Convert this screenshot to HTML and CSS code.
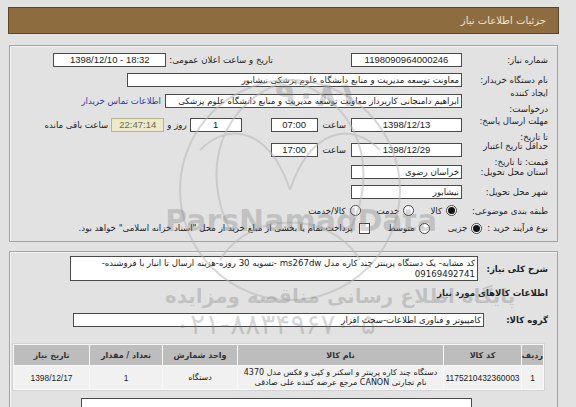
FILE: index.html
```html
<!DOCTYPE html>
<html lang="fa" dir="rtl">
<head>
<meta charset="utf-8">
<title>جزئیات اطلاعات نیاز</title>
<link rel="stylesheet" href="styles.css">
</head>
<body>
<div class="page">
  <div class="titlebar">جزئیات اطلاعات نیاز</div>

  <div class="panel form">
    <div class="lbl">شماره نیاز:</div>
    <div class="cell">
      <span class="box c w111">1198090964000246</span>
      <span class="txt pub">تاریخ و ساعت اعلان عمومی:</span>
      <span class="box c w113 ltr">1398/12/10 - 18:32</span>
    </div>

    <div class="lbl">نام دستگاه خریدار:</div>
    <div class="cell">
      <span class="box w335">معاونت توسعه مدیریت و منابع دانشگاه علوم پزشکی نیشابور</span>
    </div>

    <div class="lbl">ایجاد کننده<br>درخواست:</div>
    <div class="cell">
      <span class="box w297">ابراهیم دامنجانی  کاربرداز معاونت توسعه مدیریت و منابع دانشگاه علوم پزشکی</span>
      <a class="link" href="#">اطلاعات تماس خریدار</a>
    </div>

    <div class="lbl low">مهلت ارسال پاسخ:<br>تا تاریخ:</div>
    <div class="cell">
      <span class="box c w111">1398/12/13</span>
      <span class="txt hour">ساعت</span>
      <span class="box c w47">07:00</span>
      <span class="box c w52 days">1</span>
      <span class="txt">روز و</span>
      <span class="box c w53 timer">22:47:14</span>
      <span class="txt">ساعت باقی مانده</span>
    </div>

    <div class="lbl low">حداقل تاریخ اعتبار<br>قیمت: تا تاریخ:</div>
    <div class="cell">
      <span class="box c w111">1398/12/29</span>
      <span class="txt hour">ساعت</span>
      <span class="box c w47">17:00</span>
    </div>

    <div class="lbl">استان محل تحویل:</div>
    <div class="cell"><span class="box w111">خراسان رضوی</span></div>

    <div class="lbl">شهر محل تحویل:</div>
    <div class="cell"><span class="box w111">نیشابور</span></div>

    <div class="lbl">طبقه بندی موضوعی:</div>
    <div class="cell opts">
      <span class="opt"><span class="radio on"></span><span>کالا</span></span>
      <span class="opt"><span class="radio"></span><span>خدمت</span></span>
      <span class="opt"><span class="radio"></span><span>کالا/خدمت</span></span>
    </div>

    <div class="full">
      <span class="lbl">نوع فرآیند خرید :</span>
      <span class="opt"><span class="radio on"></span><span>جزیی</span></span>
      <span class="opt"><span class="radio"></span><span>متوسط</span></span>
      <span class="opt"><span class="check"></span><span>پرداخت تمام یا بخشی از مبلغ خرید از محل "اسناد خزانه اسلامی" خواهد بود.</span></span>
    </div>
  </div>

  <div class="panel second">
    <div class="row">
      <div class="blbl w79">شرح کلی نیاز:</div>
      <div class="area">کد مشابه- یک دستگاه پرینتر چند کاره مدل ms267dw -تسویه 30 روزه-هزینه ارسال تا انبار با فروشنده-<wbr>09169492741</div>
    </div>
    <div class="heading">اطلاعات کالاهای مورد نیاز</div>
    <div class="row grp">
      <div class="blbl w73">گروه کالا:</div>
      <span class="box w411">کامپیوتر و فناوری اطلاعات-سخت افزار</span>
    </div>

    <table class="items">
      <thead>
        <tr>
          <th class="c1">ردیف</th>
          <th class="c2">کد کالا</th>
          <th class="c3">نام کالا</th>
          <th class="c4">واحد شمارش</th>
          <th class="c5">تعداد / مقدار</th>
          <th class="c6">تاریخ نیاز</th>
        </tr>
      </thead>
      <tbody>
        <tr>
          <td class="num">1</td>
          <td class="num">1175210432360003</td>
          <td class="name">دستگاه چند کاره پرینتر و اسکنر و کپی و فکس مدل 4370<br>نام تجارتی CANON مرجع عرضه کننده علی صادقی</td>
          <td>دستگاه</td>
          <td class="num">1</td>
          <td class="num">1398/12/17</td>
        </tr>
      </tbody>
    </table>

    <div class="bottombox"></div>
  </div>

  <div class="watermark" aria-hidden="true">
    <svg class="wm-logo" width="260" height="260" viewBox="0 0 260 260">
      <g fill="none" stroke="#b9b9b9" stroke-width="2">
        <path d="M130 20 C60 40 40 110 70 170"/>
        <path d="M130 20 C200 40 220 110 190 170"/>
        <path d="M40 90 C70 60 110 70 130 130"/>
        <path d="M220 90 C190 60 150 70 130 130"/>
        <path d="M60 200 C90 150 170 150 200 200"/>
        <circle cx="130" cy="130" r="110"/>
      </g>
    </svg>
    <div class="wm-num1">۹۰۸۱</div>
    <div class="wm-brand">ParsNamadData</div>
    <div class="wm-fa">پایگاه اطلاع رسانی مناقصه ومزایده</div>
    <div class="wm-phone">۰۲۱-۸۸۳۴۹۶۷۰-۵</div>
  </div>
</div>
</body>
</html>
```

FILE: styles.css
```css
* { box-sizing: border-box; }
html, body { margin: 0; }
body {
  background: #e2e2e2;
  font-family: Tahoma, "DejaVu Sans", sans-serif;
  font-size: 8.6px;
  color: #222;
  direction: rtl;
}
.page {
  position: relative;
  width: 576px;
  height: 407px;
  overflow: hidden;
  padding: 7px 17px 0 8px;
}
.titlebar {
  height: 27px;
  background: #8d6c3f;
  border: 1px solid #5b4526;
  color: #f3e7cf;
  padding-right: 12px;
  line-height: 25px;
  font-size: 10px;
}
.panel {
  margin: 11px 1px 0 1px;
  border: 1px solid #a3a3a3;
  box-shadow: inset 1px 1px 0 #f4f4f4;
}
.form {
  display: grid;
  grid-template-columns: 95px 1fr;
  grid-template-rows: 20px 19px 23px 25px 25px 20px 20px 17px 18px;
  align-items: center;
  padding: 4px 0;
}
.lbl {
  padding-right: 9px;
  line-height: 16px;
  white-space: nowrap;
}
.lbl.low { padding-top: 8px; }
.cell {
  display: flex;
  align-items: center;
}
.full {
  grid-column: 1 / -1;
  display: flex;
  align-items: center;
}
.full .lbl { margin-left: 5px; }
.box {
  display: block;
  height: 14px;
  line-height: 12px;
  background: #fff;
  border: 1px solid #4a4a4a;
  padding: 0 2px;
  white-space: nowrap;
  overflow: hidden;
  flex: none;
}
.box.c {
  text-align: center;
  font-family: "Liberation Sans", "DejaVu Sans", sans-serif;
  font-size: 9.5px;
}
.ltr { direction: ltr; }
.w111 { width: 111px; }
.w113 { width: 113px; }
.w335 { width: 335px; }
.w297 { width: 297px; }
.w47 { width: 47px; }
.w52 { width: 52px; }
.w53 { width: 53px; }
.w411 { width: 411px; }
.txt { white-space: nowrap; padding: 0 3px; }
.pub { margin-right: 75px; }
.hour { margin: 0 5px; padding: 0; }
.days { margin-right: 29px; }
.timer {
  background: #ebeacb;
  border-color: #b8b58f;
  color: #6d6b4c;
}
.link {
  color: #2b3aa8;
  text-decoration: none;
  margin-right: 4px;
  white-space: nowrap;
}
.opt {
  display: flex;
  align-items: center;
  white-space: nowrap;
  margin-left: 16px;
}
.full .opt { margin-left: 18px; }
.opts .opt:first-child { margin-right: 5px; }
.radio {
  width: 11px;
  height: 11px;
  border: 1px solid #444;
  border-radius: 50%;
  background: #fff;
  margin-left: 4px;
  position: relative;
  flex: none;
}
.radio.on::after {
  content: "";
  position: absolute;
  left: 1px;
  top: 1px;
  width: 7px;
  height: 7px;
  border-radius: 50%;
  background: #111;
}
.check {
  width: 11px;
  height: 11px;
  border: 1px solid #444;
  background: #fff;
  margin-left: 6px;
  flex: none;
}
.second { margin-top: 9px; padding: 4px 0 0 0; height: 170px; }
.row { display: flex; align-items: center; }
.blbl {
  font-weight: bold;
  padding-right: 9px;
  flex: none;
  white-space: nowrap;
}
.w79 { width: 79px; }
.w73 { width: 73px; }
.area {
  width: 408px;
  height: 25px;
  background: #fff;
  border: 1px solid #4a4a4a;
  padding: 1px 2px;
  line-height: 11px;
  font-size: 8.6px;
}
.heading {
  font-weight: bold;
  padding-right: 9px;
  line-height: 14px;
  margin-top: 5px;
}
.grp { margin-top: 13px; }
.items {
  margin: 16px 12px 0 11px;
  width: 524px;
  border-collapse: separate;
  border-spacing: 1px;
  background: #f8f8f8;
  border: 1px solid #d2d2d2;
  font-size: 8px;
  table-layout: fixed;
}
.items th {
  background: #bdbdbd;
  color: #333;
  font-weight: bold;
  height: 20px;
  padding: 0;
  white-space: nowrap;
}
.items td {
  background: #f1f1f1;
  text-align: center;
  height: 23px;
  line-height: 10px;
  padding: 0;
  white-space: nowrap;
  overflow: hidden;
}
.items td.num {
  font-family: "Liberation Sans", "DejaVu Sans", sans-serif;
  font-size: 8.4px;
}
.c1 { width: 21px; }
.c2 { width: 77px; }
.c3 { width: 205px; }
.c4 { width: 74px; }
.c5 { width: 72px; }
.c6 { width: 75px; }
.bottombox {
  margin: 7px 85px 0 0;
  width: 391px;
  height: 30px;
  background: #fff;
  border: 1px solid #4a4a4a;
}
.watermark {
  position: absolute;
  inset: 0;
  pointer-events: none;
  color: rgba(110, 110, 110, 0.28);
  font-family: "DejaVu Sans", sans-serif;
}
.wm-logo {
  position: absolute;
  left: 160px;
  top: 60px;
  opacity: 0.55;
}
.wm-num1 {
  position: absolute;
  left: 275px;
  top: 74px;
  font-size: 34px;
  font-weight: bold;
  direction: ltr;
}
.wm-brand {
  position: absolute;
  left: 165px;
  top: 203px;
  font-size: 30px;
  font-weight: bold;
  direction: ltr;
}
.wm-fa {
  position: absolute;
  left: 165px;
  top: 284px;
  font-size: 20px;
  font-weight: bold;
  white-space: nowrap;
}
.wm-phone {
  position: absolute;
  left: 175px;
  top: 308px;
  font-size: 28px;
  direction: ltr;
  white-space: nowrap;
}
```
